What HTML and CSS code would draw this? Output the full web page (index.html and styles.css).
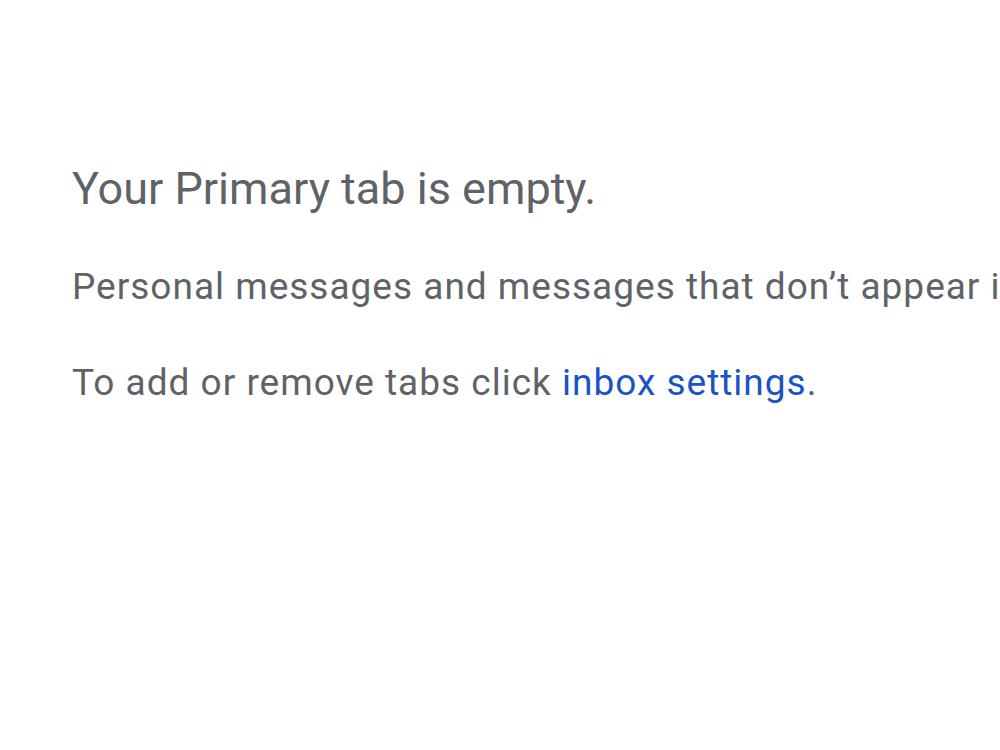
FILE: index.html
```html
<!DOCTYPE html>
<html lang="en">
<head>
  <meta charset="UTF-8">
  <meta name="viewport" content="width=device-width, initial-scale=1.0">
  <title>Primary</title>
  <link rel="stylesheet" href="styles.css">
</head>
<body>
<div class="empty">
  <h1 class="empty-title">Your Primary tab is empty.</h1>
  <p class="empty-text">Personal messages and messages that don’t appear in other tabs will be shown here.</p>
  <p class="empty-text">To add or remove tabs click <a href="#" class="link">inbox settings</a>.</p>
</div>
</body>
</html>
```

FILE: styles.css
```css
body{
  margin:0;
  background-color:#fff;
  overflow:hidden;
}
.empty{
  padding:161px 0 0 72px;
  font-family:Roboto, "Liberation Sans", sans-serif;
  color:#5f6368;
  white-space:nowrap;
  overflow:hidden;
}
.empty-title{
  font-size:45px;
  font-weight:400;
  margin:0 0 46px 0;
  line-height:56px;
}
.empty-text{
  font-size:37px;
  letter-spacing:1px;
  line-height:48px;
  margin:0 0 48px 0;
}
.link{
  color:#1a53c5;
  text-decoration:none;
}
```
